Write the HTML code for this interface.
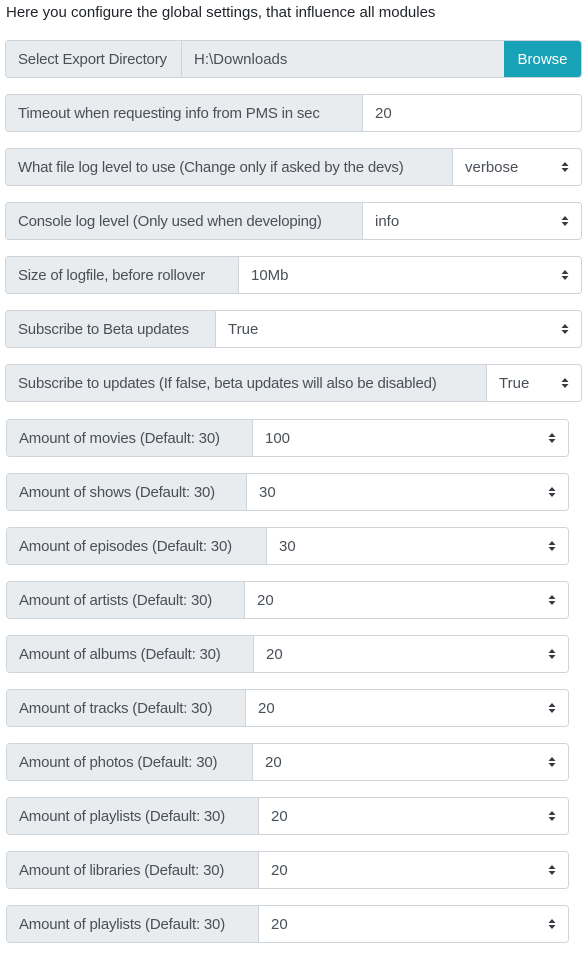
<!DOCTYPE html>
<html><head><style>
body{margin:0;width:588px;height:958px;background:#fff;font-family:"Liberation Sans",sans-serif;color:#212529;position:relative;overflow:hidden}
.t{position:absolute;left:6px;top:4px;font-size:15px}
.g{position:absolute;height:36px;border:1px solid #ced4da;border-radius:4px;display:flex;overflow:hidden;font-size:15px;color:#495057}
.l{background:#e9ecef;border-right:1px solid #ced4da;display:flex;align-items:center;padding-left:12px;white-space:nowrap;box-sizing:border-box;letter-spacing:-0.2px}
.v{flex:1;display:flex;align-items:center;padding-left:12px;position:relative;background:#fff}
.v.d{background:#e9ecef}
.a{position:absolute;right:12px;top:11px;width:8px;height:14px}
.b{background:#17a2b8;color:#fff;width:77px;display:flex;align-items:center;justify-content:center}
.w1{left:5px;width:575px}
.w2{left:6px;width:561px}
</style></head><body>
<svg width="0" height="0" style="position:absolute"><defs><symbol id="ar" viewBox="0 0 8 14"><path d="M4 2L7.5 6H0.5Z M4 12L7.5 8H0.5Z" fill="#343a40"/></symbol></defs></svg>
<div class="t">Here you configure the global settings, that influence all modules</div>
<div class="g w1" style="top:40px"><div class="l" style="width:176px">Select Export Directory</div><div class="v d">H:\Downloads</div><div class="b">Browse</div></div>
<div class="g w1" style="top:94px"><div class="l" style="width:357px">Timeout when requesting info from PMS in sec</div><div class="v">20</div></div>
<div class="g w1" style="top:148px"><div class="l" style="width:447px">What file log level to use (Change only if asked by the devs)</div><div class="v">verbose<svg class="a"><use href="#ar"/></svg></div></div>
<div class="g w1" style="top:202px"><div class="l" style="width:357px">Console log level (Only used when developing)</div><div class="v">info<svg class="a"><use href="#ar"/></svg></div></div>
<div class="g w1" style="top:256px"><div class="l" style="width:233px">Size of logfile, before rollover</div><div class="v">10Mb<svg class="a"><use href="#ar"/></svg></div></div>
<div class="g w1" style="top:310px"><div class="l" style="width:210px">Subscribe to Beta updates</div><div class="v">True<svg class="a"><use href="#ar"/></svg></div></div>
<div class="g w1" style="top:364px"><div class="l" style="width:481px">Subscribe to updates (If false, beta updates will also be disabled)</div><div class="v">True<svg class="a"><use href="#ar"/></svg></div></div>
<div class="g w2" style="top:419px"><div class="l" style="width:246px">Amount of movies (Default: 30)</div><div class="v">100<svg class="a"><use href="#ar"/></svg></div></div>
<div class="g w2" style="top:473px"><div class="l" style="width:240px">Amount of shows (Default: 30)</div><div class="v">30<svg class="a"><use href="#ar"/></svg></div></div>
<div class="g w2" style="top:527px"><div class="l" style="width:260px">Amount of episodes (Default: 30)</div><div class="v">30<svg class="a"><use href="#ar"/></svg></div></div>
<div class="g w2" style="top:581px"><div class="l" style="width:238px">Amount of artists (Default: 30)</div><div class="v">20<svg class="a"><use href="#ar"/></svg></div></div>
<div class="g w2" style="top:635px"><div class="l" style="width:247px">Amount of albums (Default: 30)</div><div class="v">20<svg class="a"><use href="#ar"/></svg></div></div>
<div class="g w2" style="top:689px"><div class="l" style="width:239px">Amount of tracks (Default: 30)</div><div class="v">20<svg class="a"><use href="#ar"/></svg></div></div>
<div class="g w2" style="top:743px"><div class="l" style="width:246px">Amount of photos (Default: 30)</div><div class="v">20<svg class="a"><use href="#ar"/></svg></div></div>
<div class="g w2" style="top:797px"><div class="l" style="width:252px">Amount of playlists (Default: 30)</div><div class="v">20<svg class="a"><use href="#ar"/></svg></div></div>
<div class="g w2" style="top:851px"><div class="l" style="width:252px">Amount of libraries (Default: 30)</div><div class="v">20<svg class="a"><use href="#ar"/></svg></div></div>
<div class="g w2" style="top:905px"><div class="l" style="width:252px">Amount of playlists (Default: 30)</div><div class="v">20<svg class="a"><use href="#ar"/></svg></div></div>
</body></html>
